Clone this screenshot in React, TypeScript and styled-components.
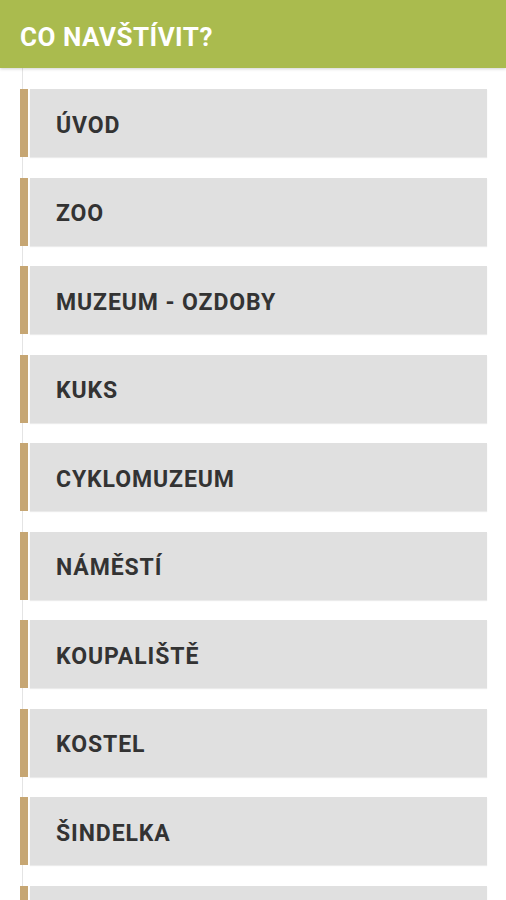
import React from "react";
import styled, { createGlobalStyle } from "styled-components";

const GlobalStyle = createGlobalStyle`
  html, body {
    margin: 0;
    padding: 0;
    background: #ffffff;
    font-family: Roboto, "Liberation Sans", sans-serif;
  }
  * {
    box-sizing: border-box;
  }
`;

const Page = styled.div`
  width: 506px;
  height: 900px;
  overflow: hidden;
  background: #ffffff;
`;

const Header = styled.header`
  height: 68px;
  display: flex;
  align-items: center;
  padding: 5px 20px 0;
  background-color: #aabb4e;
  box-shadow: 0 1px 3px rgba(0, 0, 0, 0.18);
  position: relative;
  z-index: 1;
`;

const Title = styled.h1`
  margin: 0;
  color: #ffffff;
  font-size: 26px;
  font-weight: 700;
  letter-spacing: 0.5px;
`;

const List = styled.ul`
  list-style: none;
  margin: 0;
  padding: 21px 19px 0 20px;
  display: flex;
  flex-direction: column;
  gap: 20.5px;
  background-image: linear-gradient(#e4e4e4, #e4e4e4);
  background-size: 1px 100%;
  background-position: 22px 0;
  background-repeat: no-repeat;
  min-height: 832px;
`;

const Item = styled.li`
  display: flex;
  height: 68px;
  flex-shrink: 0;
`;

const Marker = styled.span`
  width: 8px;
  flex-shrink: 0;
  background-color: #c6a673;
`;

const Card = styled.a`
  flex: 1;
  margin-left: 2px;
  display: flex;
  align-items: center;
  padding: 4px 0 0 26px;
  background-color: #e0e0e0;
  box-shadow: 0 1px 1px rgba(0, 0, 0, 0.08);
  color: #333333;
  text-decoration: none;
  font-size: 23px;
  font-weight: 700;
  letter-spacing: 0.9px;
`;

const places = [
  "ÚVOD",
  "ZOO",
  "MUZEUM - OZDOBY",
  "KUKS",
  "CYKLOMUZEUM",
  "NÁMĚSTÍ",
  "KOUPALIŠTĚ",
  "KOSTEL",
  "ŠINDELKA",
  "",
];

const App: React.FC = () => {
  return (
    <Page>
      <GlobalStyle />
      <Header>
        <Title>CO NAVŠTÍVIT?</Title>
      </Header>
      <List>
        {places.map((p, i) => (
          <Item key={i}>
            <Marker />
            <Card href="#">{p}</Card>
          </Item>
        ))}
      </List>
    </Page>
  );
};

export default App;
